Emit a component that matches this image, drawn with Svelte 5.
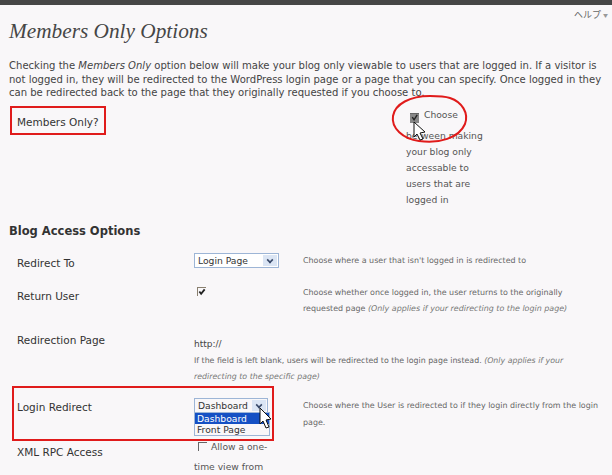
<script>
	const help = 'ヘルプ';
</script>

<div class="page">
	<div class="topbar"></div>
	<div class="help">{help} <span class="caret">▼</span></div>

	<div class="wrap">
		<h2>Members Only Options</h2>
		<p class="intro">
			Checking the <em>Members Only</em> option below will make your blog only viewable to users that are logged in. If a visitor is not logged in, they will be redirected to the WordPress login page or a page that you can specify. Once logged in they can be redirected back to the page that they originally requested if you choose to.
		</p>

		<div class="main-row">
			<div class="main-label">Members Only?</div>
			<div class="main-field">
				<div class="choose">
					<span class="check grey">
						<svg viewBox="0 0 9 9" width="9" height="8"><path d="M2 3.5l2 3L7.5 1" fill="none" stroke="#222" stroke-width="1.6" /></svg>
					</span>
					<span>Choose</span>
				</div>
				<p>between making your blog only accessable to users that are logged in</p>
			</div>
		</div>

		<h3>Blog Access Options</h3>

		<div class="row r1">
			<div class="label">Redirect To</div>
			<div class="field">
				<div class="select">Login Page<span class="arrow"></span></div>
			</div>
			<div class="desc">Choose where a user that isn't logged in is redirected to</div>
		</div>

		<div class="row r2">
			<div class="label">Return User</div>
			<div class="field">
				<span class="check on">
					<svg viewBox="0 0 9 9" width="8" height="8"><path d="M1.5 4l2 2.5L7.5 1.5" fill="none" stroke="#222" stroke-width="2" /></svg>
				</span>
			</div>
			<div class="desc">Choose whether once logged in, the user returns to the originally requested page <em>(Only applies if your redirecting to the login page)</em></div>
		</div>

		<div class="row r3">
			<div class="label">Redirection Page</div>
			<div class="wide">
				<div class="url">http://</div>
				<div class="desc">If the field is left blank, users will be redirected to the login page instead. <em>(Only applies if your redirecting to the specific page)</em></div>
			</div>
		</div>

		<div class="row r4">
			<div class="label">Login Redirect</div>
			<div class="field">
				<div class="select open">Dashboard<span class="arrow"></span>
					<div class="list">
						<div class="opt sel">Dashboard</div>
						<div class="opt">Front Page</div>
					</div>
				</div>
			</div>
			<div class="desc">Choose where the User is redirected to if they login directly from the login page.</div>
		</div>

		<div class="row r5">
			<div class="label">XML RPC Access</div>
			<div class="field allow">
				<span class="check off"></span>Allow a one-time view from
			</div>
			<div class="desc"></div>
		</div>
	</div>

	<!-- annotations drawn over the screenshot -->
	<div class="box box1"></div>
	<div class="box box2"></div>
	<svg class="ring" width="612" height="475" viewBox="0 0 612 475">
		<path d="M430 96c-20 0-35 8-37 20-2 12 10 23 26 25 20 3 40-3 46-17 4-11-3-22-15-26-6-2-13-2-20-2z" fill="none" stroke="#e01b1b" stroke-width="2" />
		<path class="cursor" d="M414 122v15l3-3 3 6 3-1-3-6 5-1z" />
		<path class="cursor" d="M260 408v16l3-3 3 7 3-1-3-7 5-1z" />
	</svg>
</div>

<style>
	:global(body) {
		margin: 0;
		background: #f9f7f9;
		overflow: hidden;
	}

	.page {
		position: relative;
		width: 612px;
		height: 475px;
		overflow: hidden;
		background: #f9f7f9;
		color: #333;
		font-family: 'DejaVu Sans', sans-serif;
		font-size: 10.5px;
	}

	.topbar {
		height: 5px;
		background: #464646;
	}

	.help {
		position: absolute;
		top: 8px;
		right: 4px;
		font-family: 'Noto Sans CJK JP', sans-serif;
		font-size: 9px;
		color: #666;
	}

	.caret {
		font-size: 5px;
		color: #999;
		vertical-align: 1px;
	}

	.wrap {
		padding: 0 9px;
	}

	h2 {
		margin: 10px 0 0;
		font-family: 'Liberation Serif', serif;
		font-style: italic;
		font-weight: 400;
		font-size: 21.3px;
		line-height: 32px;
		color: #464646;
	}

	.intro {
		margin: 12px 0 0;
		font-size: 10.05px;
		line-height: 13.5px;
		color: #444;
	}

	.main-row {
		display: flex;
		margin-top: 10.5px;
		height: 100px;
		line-height: 16px;
	}

	.main-label {
		width: 397px;
		padding: 4px 0 0 8px;
		box-sizing: border-box;
	}

	.main-field {
		width: 80px;
		font-size: 9.2px;
		color: #555;
	}

	.main-field p {
		margin: 5px 0 0;
		line-height: 16px;
	}

	.choose {
		display: flex;
		align-items: flex-start;
		gap: 5px;
		margin-top: -3px;
		padding-left: 4px;
		height: 16px;
	}

	.check {
		display: block;
		width: 9px;
		height: 9px;
		flex: none;
	}

	.check.grey {
		margin-top: 6px;
		background: #888;
		border-top: 1px solid #666;
	}

	.check.grey svg {
		display: block;
	}

	.check.on {
		width: 8px;
		height: 8px;
		border-top: 1px solid #8a8070;
		border-left: 1px solid #8a8070;
	}

	.check.on svg {
		display: block;
	}

	.check.off {
		display: inline-block;
		width: 8px;
		height: 8px;
		border-top: 1px solid #666;
		border-left: 1px solid #666;
		margin: 0 4px 0 4px;
		vertical-align: -1px;
	}

	h3 {
		margin: 13px 0 0;
		font-size: 11.5px;
		line-height: 16px;
		font-weight: 700;
		color: #333;
	}

	.row {
		display: grid;
		grid-template-columns: 177px 109px 1fr;
		padding-left: 8px;
	}

	.label {
		font-size: 10.5px;
		color: #333;
	}

	.field {
		min-width: 0;
	}

	.desc {
		font-size: 7.95px;
		line-height: 16px;
		color: #666;
	}

	.desc em {
		color: #777;
	}

	.r1 {
		margin-top: 12px;
		height: 33px;
	}

	.r1 .label {
		padding-top: 6px;
	}

	.r1 .field {
		padding-top: 2px;
	}

	.r1 .desc {
		padding-top: 2px;
	}

	.r2 {
		height: 45px;
	}

	.r2 .label {
		padding-top: 6px;
	}

	.r2 .field {
		padding: 3px 0 0 3px;
	}

	.r2 .desc {
		padding-top: 1px;
	}

	.r3 {
		height: 54px;
		grid-template-columns: 177px 1fr;
	}

	.r3 .label {
		padding-top: 5px;
	}

	.wide .url {
		font-size: 9px;
		line-height: 16px;
		padding-top: 7px;
		color: #444;
	}

	.wide .desc {
		font-size: 7.85px;
		padding-top: 1px;
	}

	.r4 {
		margin-top: 12px;
		height: 46px;
	}

	.r4 .label {
		padding-top: 6px;
	}

	.r4 .desc {
		padding-top: 2px;
		line-height: 17px;
	}

	.r4 .field {
		position: relative;
		padding-top: 3px;
	}

	.r5 {
		height: 34px;
	}

	.r5 .label {
		padding-top: 5px;
	}

	.select {
		position: relative;
		box-sizing: border-box;
		width: 85px;
		height: 15px;
		padding-left: 3px;
		border: 1px solid #9db5d6;
		background: #fff;
		font-size: 9.2px;
		line-height: 13px;
		color: #333;
	}

	.select.open {
		width: 74px;
		background: #f9f7f9;
	}

	.arrow {
		position: absolute;
		top: 1px;
		right: 1px;
		width: 14px;
		height: 11px;
		background: #dbe5f4;
	}

	.arrow::after {
		content: '';
		position: absolute;
		left: 4px;
		top: 2px;
		width: 4px;
		height: 4px;
		border-right: 2px solid #3a4a6a;
		border-bottom: 2px solid #3a4a6a;
		transform: rotate(45deg) scale(0.8);
	}

	.list {
		position: absolute;
		left: -1px;
		top: 13px;
		width: 74px;
		border: 1px solid #9db5d6;
		background: #f9f7f9;
		line-height: 11px;
	}

	.opt {
		padding-left: 2px;
		height: 11px;
	}

	.opt.sel {
		background: #1550c4;
		color: #fff;
	}

	.allow {
		margin-top: -4px;
		font-size: 9.2px;
		line-height: 20px;
		width: 80px;
		color: #555;
	}

	.box {
		position: absolute;
		border: 2px solid #e01b1b;
		box-sizing: border-box;
	}

	.box1 {
		left: 10px;
		top: 106px;
		width: 96px;
		height: 29px;
	}

	.box2 {
		left: 12px;
		top: 386px;
		width: 262px;
		height: 55px;
	}

	.ring {
		position: absolute;
		left: 0;
		top: 0;
		pointer-events: none;
	}

	.cursor {
		fill: #fff;
		stroke: #111;
		stroke-width: 1;
	}
</style>
